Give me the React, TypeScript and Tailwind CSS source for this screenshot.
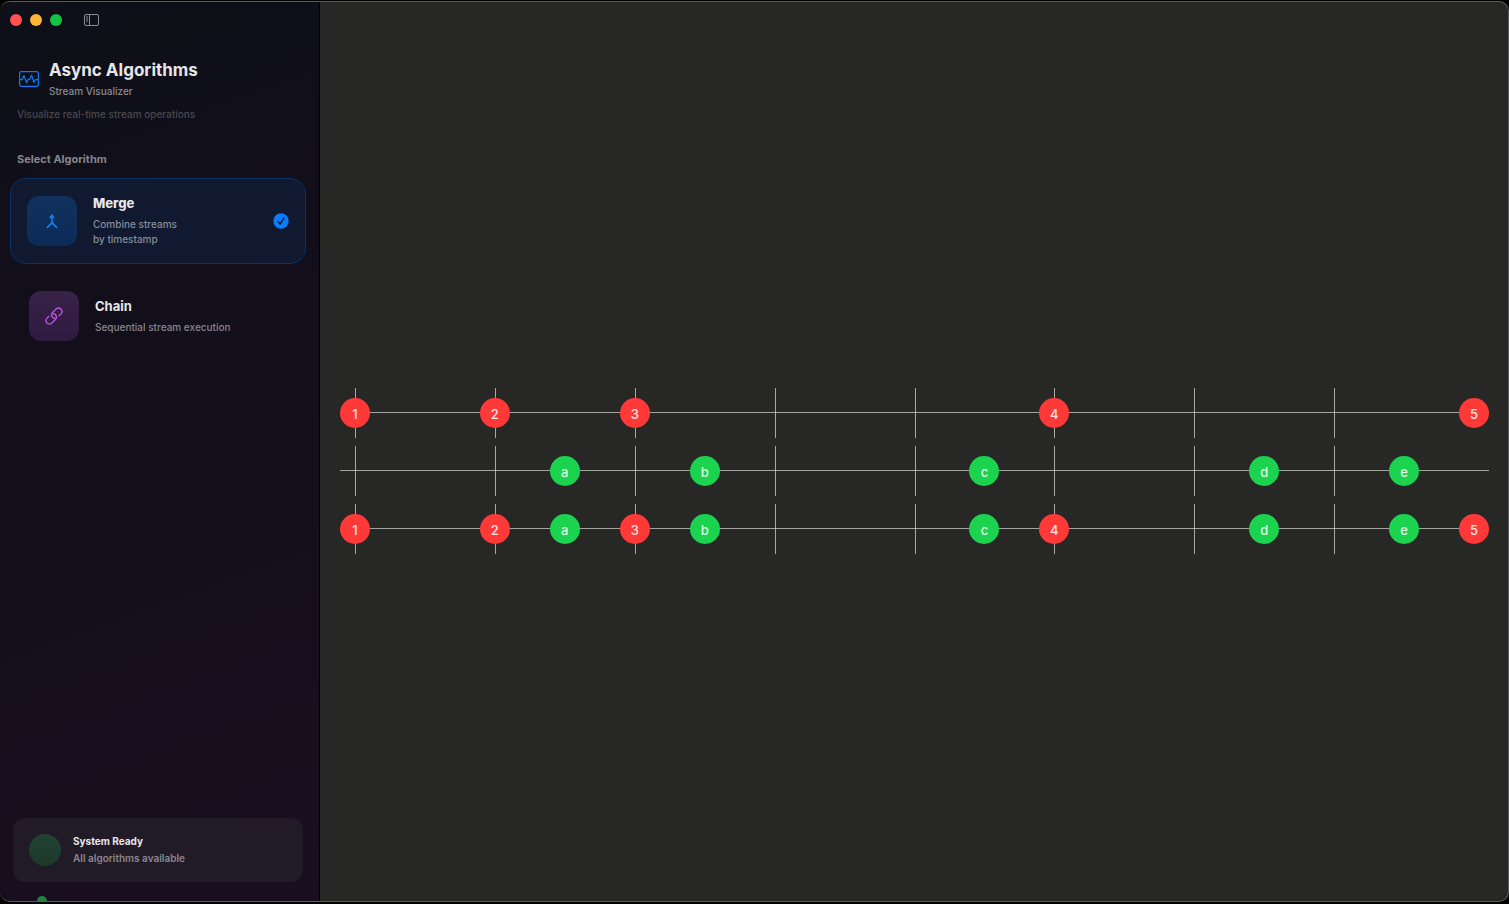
import React, { useState } from "react";

type Kind = "number" | "letter";

interface StreamEvent {
  value: string;
  time: number;
  kind: Kind;
}

const SPAN = 8;
const TICKS = [0, 1, 2, 3, 4, 5, 6, 7];

const numbers: StreamEvent[] = [
  { value: "1", time: 0, kind: "number" },
  { value: "2", time: 1, kind: "number" },
  { value: "3", time: 2, kind: "number" },
  { value: "4", time: 5, kind: "number" },
  { value: "5", time: 8, kind: "number" },
];

const letters: StreamEvent[] = [
  { value: "a", time: 1.5, kind: "letter" },
  { value: "b", time: 2.5, kind: "letter" },
  { value: "c", time: 4.5, kind: "letter" },
  { value: "d", time: 6.5, kind: "letter" },
  { value: "e", time: 7.5, kind: "letter" },
];

const merged = [...numbers, ...letters].sort((a, b) => a.time - b.time);
const chained = [...numbers, ...letters];

const at = (time: number) => ({ left: `${(time / SPAN) * 100}%` });

function Timeline({ events }: { events: StreamEvent[] }) {
  return (
    <div className="relative h-[50px] px-[15px]">
      <div className="absolute inset-x-0 top-6 h-px bg-[#a3a3a2]" />
      <div className="relative h-full">
        {TICKS.map((t) => (
          <div key={t} className="absolute inset-y-0 w-px bg-[#c8c8c7]/80" style={at(t)} />
        ))}
        {events.map((e) => (
          <div
            key={e.value}
            className={`absolute top-[10px] -ml-[15px] flex size-[30px] items-center justify-center rounded-full pt-0.5 text-[13px] leading-4 font-medium text-white/85 ${
              e.kind === "number" ? "bg-[#ff3937]" : "bg-[#1bd34f]"
            }`}
            style={at(e.time)}
          >
            {e.value}
          </div>
        ))}
      </div>
    </div>
  );
}

function SidebarIcon() {
  return (
    <svg width="15" height="13" viewBox="0 0 15 13" fill="none" stroke="#8c8c91" aria-hidden="true">
      <rect x="0.5" y="0.5" width="14" height="11" rx="1.5" />
      <path d="M5.5 0.5v11M2 3h2M2 5h2M2 7h2" />
    </svg>
  );
}

function WaveformIcon() {
  return (
    <svg width="20" height="16" viewBox="0 0 20 16" fill="none" stroke="#0a7aff" strokeLinejoin="round" strokeLinecap="round" aria-hidden="true">
      <rect x="0.6" y="0.7" width="18.8" height="14.6" rx="1.8" strokeWidth="1.2" />
      <path d="M1 8.6h2.3L5 4.6l2.6 7.2L9 8.4h1.6l2-4.2 2.3 7.4 1.5-3H19" strokeWidth="1.2" />
    </svg>
  );
}

function MergeIcon() {
  return (
    <svg width="12" height="16" viewBox="0 0 12 16" fill="none" stroke="#0a84ff" strokeWidth="1.5" strokeLinecap="round" strokeLinejoin="round" aria-hidden="true">
      <path d="M6 3v5.6c0 1-.4 1.6-1.1 2.3L1.4 14.4M6 8.6c0 1 .4 1.6 1.1 2.3l3.5 3.5" />
      <path d="M6 1.8 8.1 4.8H3.9z" fill="#0a84ff" strokeWidth="1" />
    </svg>
  );
}

function ChainIcon() {
  return (
    <svg width="20" height="20" viewBox="0 0 20 20" fill="none" stroke="#b653df" strokeWidth="1.4" strokeLinecap="round" aria-hidden="true">
      <g transform="rotate(-45 10 10)">
        <path d="M13.8 13.4h2.6a3.4 3.4 0 0 0 0-6.8h-5a3.4 3.4 0 0 0-2.3 5.9" />
        <path d="M6.2 6.6H3.6a3.4 3.4 0 0 0 0 6.8h5a3.4 3.4 0 0 0 2.3-5.9" />
      </g>
    </svg>
  );
}

function CheckIcon() {
  return (
    <svg width="16" height="16" viewBox="0 0 16 16" fill="none" aria-hidden="true">
      <circle cx="8" cy="8" r="7.7" fill="#0a7cff" />
      <path d="m5 8.6 2.2 2.4 3.8-5.8" stroke="#10182f" strokeWidth="1.4" strokeLinecap="round" strokeLinejoin="round" />
    </svg>
  );
}

export default function App() {
  const [algorithm, setAlgorithm] = useState<"merge" | "chain">("merge");
  const isMerge = algorithm === "merge";

  return (
    <div className="h-screen bg-black pt-px pb-0.5 font-['Inter','Liberation_Sans',sans-serif]">
      <div className="flex h-full overflow-hidden rounded-[10px] border-y border-r border-[#5a5a5b] bg-[#272725]">
        <aside className="flex w-80 shrink-0 flex-col overflow-hidden border-r border-black bg-linear-160 from-[#0e0f18] to-[#190e20]">
          <div className="flex h-9 shrink-0 items-center pl-[10px]">
            <div className="flex gap-2">
              <button aria-label="Close" className="size-3 rounded-full bg-[#ff5150]" />
              <button aria-label="Minimize" className="size-3 rounded-full bg-[#ffb43a]" />
              <button aria-label="Zoom" className="size-3 rounded-full bg-[#14c245]" />
            </div>
            <button aria-label="Toggle sidebar" className="ml-[22px]">
              <SidebarIcon />
            </button>
          </div>

          <header className="px-[17px] pt-5">
            <div className="flex items-center gap-[10px] pl-[2px]">
              <WaveformIcon />
              <div>
                <h1 className="text-[17px] leading-6 font-bold text-[#e6e6e8]">Async Algorithms</h1>
                <p className="text-[10px] leading-[18px] font-medium text-[#8b8b91]">Stream Visualizer</p>
              </div>
            </div>
            <p className="mt-[6px] text-[10px] leading-4 font-medium text-[#48484f]">Visualize real-time stream operations</p>
          </header>

          <h2 className="mt-7 px-[17px] text-[11px] leading-[18px] font-bold text-[#85858b]">Select Algorithm</h2>

          <nav className="mt-[10px] flex flex-col gap-[11px] pr-[13px] pl-[10px]">
            <button
              onClick={() => setAlgorithm("merge")}
              aria-pressed={isMerge}
              className={`flex h-[86px] items-center rounded-2xl border px-4 text-left ${
                isMerge ? "border-[#0b3167] bg-[#10192f]" : "border-transparent"
              }`}
            >
              <span className="flex size-[50px] items-center justify-center rounded-xl bg-linear-to-b from-[#11325c] to-[#0c2a58]">
                <MergeIcon />
              </span>
              <span className="ml-4 flex-1 pb-0.5">
                <span className="block text-[13px] leading-5 font-extrabold text-[#e7e8ea]">Merge</span>
                <span className="mt-1 block text-[10px] leading-[15px] font-medium text-[#868c99]">
                  Combine streams
                  <br />
                  by timestamp
                </span>
              </span>
              {isMerge && <CheckIcon />}
            </button>
            <button
              onClick={() => setAlgorithm("chain")}
              aria-pressed={!isMerge}
              className={`flex h-[82px] items-center rounded-2xl border px-[18px] text-left ${
                isMerge ? "border-transparent" : "border-[#0b3167] bg-[#10192f]"
              }`}
            >
              <span className="flex size-[50px] items-center justify-center rounded-xl bg-linear-to-b from-[#382247] to-[#2f1a40]">
                <ChainIcon />
              </span>
              <span className="ml-4 flex-1 pb-0.5">
                <span className="block text-[13px] leading-5 font-bold text-[#e7e7e9]">Chain</span>
                <span className="mt-1 block text-[10px] leading-[15px] font-medium text-[#87858d]">Sequential stream execution</span>
              </span>
              {!isMerge && <CheckIcon />}
            </button>
          </nav>

          <footer className="mt-auto h-[83px] shrink-0">
            <div className="mr-4 ml-[13px] flex h-16 items-center gap-3 rounded-xl bg-[#211b27] px-4">
              <span className="size-8 rounded-full bg-linear-to-b from-[#214332] to-[#1d392c]" />
              <div>
                <p className="text-[10px] leading-[17px] font-bold text-[#e8e7e9]">System Ready</p>
                <p className="text-[10px] leading-[17px] font-semibold text-[#8b8790]">All algorithms available</p>
              </div>
            </div>
            <div className="mt-[14px] ml-[37px] size-[10px] rounded-full bg-[#24803f]" />
          </footer>
        </aside>

        <main className="flex min-w-0 flex-1 flex-col justify-center gap-2 pt-[39px] pr-[19px] pl-5">
          <Timeline events={numbers} />
          <Timeline events={letters} />
          <Timeline events={isMerge ? merged : chained} />
        </main>
      </div>
    </div>
  );
}
